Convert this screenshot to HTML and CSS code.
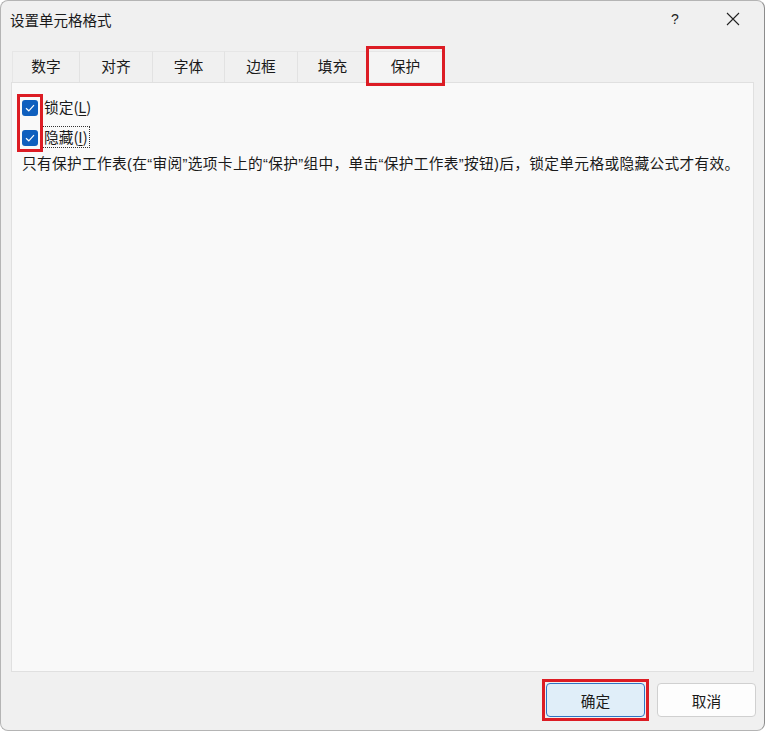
FILE: index.html
```html
<!DOCTYPE html>
<html lang="zh-CN">
<head>
<meta charset="UTF-8" />
<meta name="viewport" content="width=device-width, initial-scale=1" />
<title>设置单元格格式</title>
<link rel="stylesheet" href="styles.css">
</head>
<body>
<div class="dialog">
  <div class="titlebar">
    <span class="title">设置单元格格式</span>
    <span class="help">?</span>
    <span class="close">
      <svg width="14" height="14" viewBox="0 0 14 14"><path d="M1 1L13 13M13 1L1 13" stroke="#222" stroke-width="1.1" fill="none"/></svg>
    </span>
  </div>

  <div class="tabs">
    <div class="tab">数字</div>
    <div class="tab">对齐</div>
    <div class="tab">字体</div>
    <div class="tab">边框</div>
    <div class="tab">填充</div>
    <div class="tab active">保护</div>
  </div>

  <div class="panel">
    <div class="checks">
      <label class="check">
        <span class="box"><svg width="10" height="8" viewBox="0 0 10 8"><path d="M1 4.2L3.8 6.8L9 1.2" stroke="#fff" stroke-width="1.2" fill="none"/></svg></span>
        <span class="text">锁定(<u>L</u>)</span>
      </label>
      <label class="check">
        <span class="box"><svg width="10" height="8" viewBox="0 0 10 8"><path d="M1 4.2L3.8 6.8L9 1.2" stroke="#fff" stroke-width="1.2" fill="none"/></svg></span>
        <span class="text focus">隐藏(<u>I</u>)</span>
      </label>
      <div class="mark"></div>
    </div>
    <p class="note">只有保护工作表(在“审阅”选项卡上的“保护”组中，单击“保护工作表”按钮)后，锁定单元格或隐藏公式才有效。</p>
  </div>

  <div class="footer">
    <span class="frame"><button class="btn primary">确定</button></span>
    <button class="btn">取消</button>
  </div>
</div>
</body>
</html>
```

FILE: styles.css
```css
* {
  box-sizing: border-box;
}
body {
  margin: 0;
  background: #ffffff;
  font-family: "Noto Sans CJK SC", "Liberation Sans", sans-serif;
  font-size: 14.7px;
  color: #1a1a1a;
}
.dialog {
  width: 765px;
  height: 731px;
  background: #f0f0f0;
  border: 1px solid #b4b4b4;
  border-right-color: #8c8c8c;
  border-radius: 8px;
  display: flex;
  flex-direction: column;
  overflow: hidden;
}
.titlebar {
  height: 37px;
  display: flex;
  align-items: center;
  padding-left: 9px;
  padding-bottom: 1px;
}
.title {
  flex: 1;
  font-size: 14.5px;
}
.help {
  width: 53px;
  text-align: left;
  font-size: 14px;
  font-family: "Liberation Sans", sans-serif;
  color: #222;
}
.close {
  width: 40px;
  display: flex;
  align-items: center;
  padding-left: 2px;
}
.tabs {
  display: flex;
  margin-top: 13px;
  padding-left: 11px;
  height: 31px;
}
.tab {
  width: 72px;
  display: flex;
  align-items: center;
  justify-content: center;
  background: #f0f0f0;
  border-top: 1px solid #e6e6e6;
  border-right: 1px solid #e2e2e2;
  padding-bottom: 4px;
}
.tab:first-child {
  width: 68px;
  border-left: 1px solid #e6e6e6;
}
.tab:nth-child(2) {
  width: 73px;
}
.tab:nth-child(4) {
  width: 73px;
}
.tab:nth-child(5) {
  width: 70px;
}
.tab.active {
  width: 76px;
  background: #f4f4f4;
  position: relative;
}
/* red highlight round the selected tab */
.tab.active::after {
  content: "";
  position: absolute;
  left: -2px;
  top: -6px;
  right: -2px;
  bottom: -4px;
  border: 3px solid #dc1c24;
}
.panel {
  margin: 0 10px;
  height: 590px;
  background: #f9f9f9;
  border: 1px solid #e0e0e0;
  padding: 17px 0 0 10px;
}
.checks {
  position: relative;
  display: flex;
  flex-direction: column;
  gap: 14px;
}
.check {
  display: flex;
  align-items: center;
  height: 16px;
}
.box {
  width: 16px;
  height: 16px;
  border-radius: 3px;
  background: #0f5fbe;
  display: flex;
  align-items: center;
  justify-content: center;
  margin-right: 5px;
}
.text {
  line-height: 20px;
  padding: 0 1px;
  margin-top: -2px;
}
.text u {
  text-decoration-thickness: 1px;
  text-underline-offset: 2px;
}
.text.focus {
  outline: 1px dotted #333;
  outline-offset: 0;
}
/* red highlight round both checkboxes */
.mark {
  position: absolute;
  left: -5px;
  top: -6px;
  width: 26px;
  height: 58px;
  border: 3px solid #dc1c24;
}
.note {
  margin: 8px 0 0 0;
  font-family: "Liberation Sans", "Noto Sans CJK SC", sans-serif;
  letter-spacing: 0.33px;
  line-height: 20px;
}
.footer {
  flex: 1;
  display: flex;
  justify-content: flex-end;
  align-items: center;
  gap: 8px;
  padding: 0 8px 2px 0;
}
.frame {
  display: block;
  border: 3px solid #dc1c24;
  padding: 1px;
}
.btn {
  display: block;
  width: 99px;
  height: 34px;
  font-family: inherit;
  font-size: 14.7px;
  color: #1a1a1a;
  background: #fdfdfd;
  border: 1px solid #d0d0d0;
  border-radius: 4px;
}
.btn.primary {
  background: #e0eef9;
  border: 1px solid #2f74c5;
}
```
